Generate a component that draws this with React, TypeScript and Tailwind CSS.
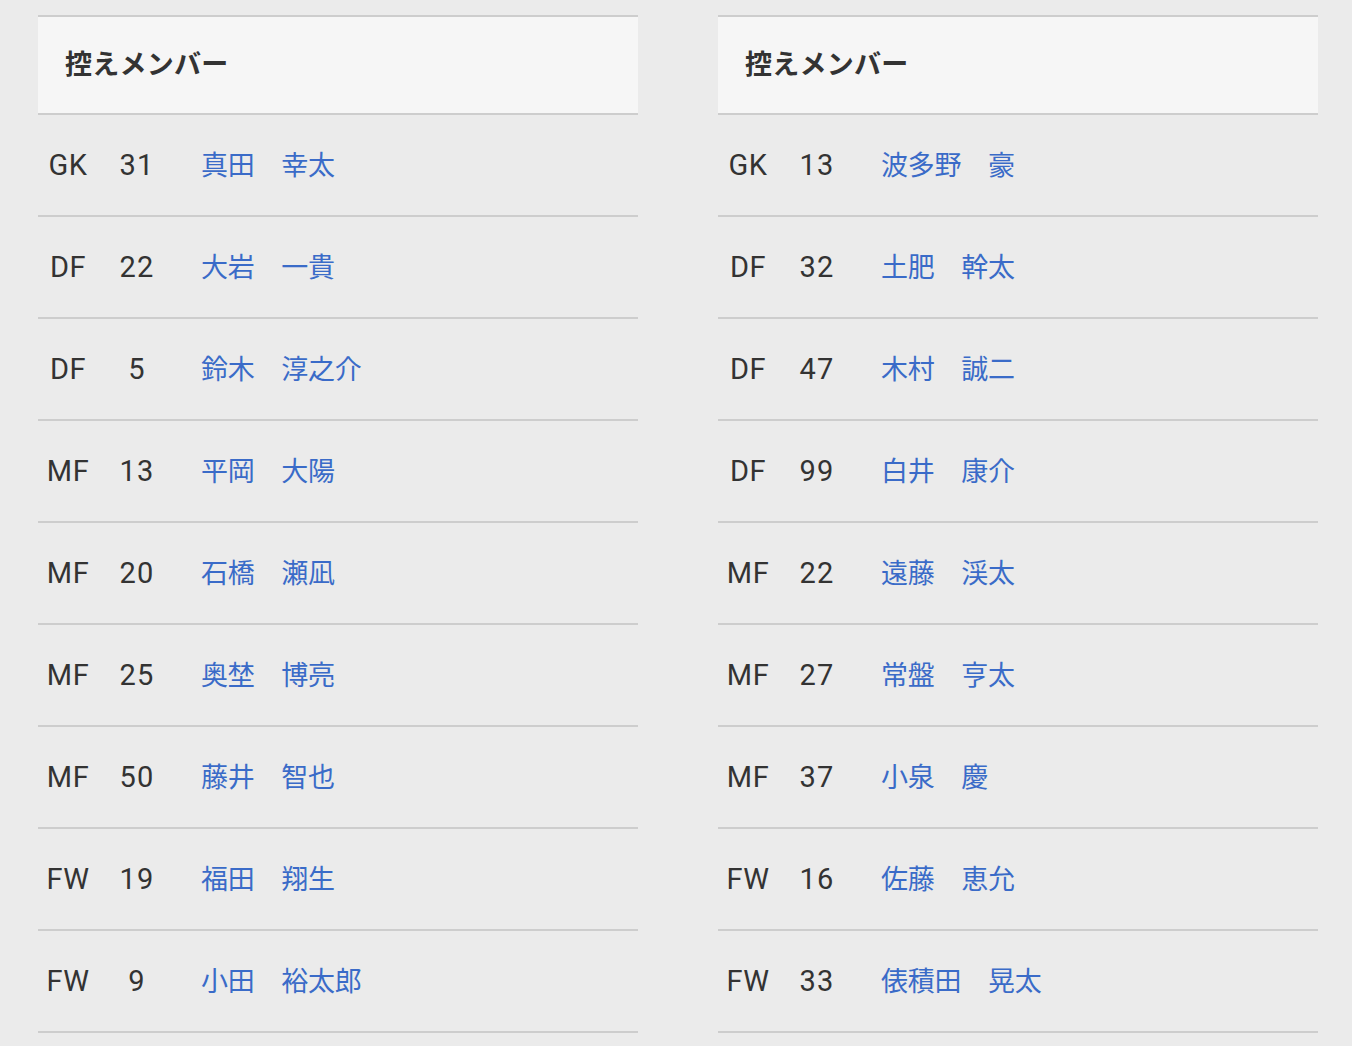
type Player = { pos: string; num: string; name: string };

const left: Player[] = [
  { pos: "GK", num: "31", name: "真田　幸太" },
  { pos: "DF", num: "22", name: "大岩　一貴" },
  { pos: "DF", num: "5", name: "鈴木　淳之介" },
  { pos: "MF", num: "13", name: "平岡　大陽" },
  { pos: "MF", num: "20", name: "石橋　瀬凪" },
  { pos: "MF", num: "25", name: "奥埜　博亮" },
  { pos: "MF", num: "50", name: "藤井　智也" },
  { pos: "FW", num: "19", name: "福田　翔生" },
  { pos: "FW", num: "9", name: "小田　裕太郎" },
];

const right: Player[] = [
  { pos: "GK", num: "13", name: "波多野　豪" },
  { pos: "DF", num: "32", name: "土肥　幹太" },
  { pos: "DF", num: "47", name: "木村　誠二" },
  { pos: "DF", num: "99", name: "白井　康介" },
  { pos: "MF", num: "22", name: "遠藤　渓太" },
  { pos: "MF", num: "27", name: "常盤　亨太" },
  { pos: "MF", num: "37", name: "小泉　慶" },
  { pos: "FW", num: "16", name: "佐藤　恵允" },
  { pos: "FW", num: "33", name: "俵積田　晃太" },
];

function SubTable({ players }: { players: Player[] }) {
  return (
    <div className="w-[600px] shrink-0">
      <div className="h-[100px] border-y-2 border-[#cdcdcd] bg-[#f6f6f6] flex items-center pl-[27px]">
        <h3 className="text-[27px] font-bold text-[#333] tracking-[0.01em]">控えメンバー</h3>
      </div>
      {players.map((p, i) => (
        <div
          key={i}
          className="h-[102px] border-b-2 border-[#cdcdcd] flex items-center pt-[2px] text-[27px]"
        >
          <span className="w-[60px] text-center text-[29px] text-[#333] tracking-[0.02em]">{p.pos}</span>
          <span className="w-[78px] text-center text-[29px] text-[#333] tracking-[0.04em]">{p.num}</span>
          <a className="pl-[25px] text-[#3a6bc8] tracking-[-0.01em]">{p.name}</a>
        </div>
      ))}
    </div>
  );
}

export default function App() {
  return (
    <div
      className="min-h-[1046px] bg-[#ebebeb] pt-[15px] pl-[38px] flex gap-[80px]"
      style={{ fontFamily: 'Roboto, "Noto Sans CJK JP", sans-serif' }}
    >
      <SubTable players={left} />
      <SubTable players={right} />
    </div>
  );
}
